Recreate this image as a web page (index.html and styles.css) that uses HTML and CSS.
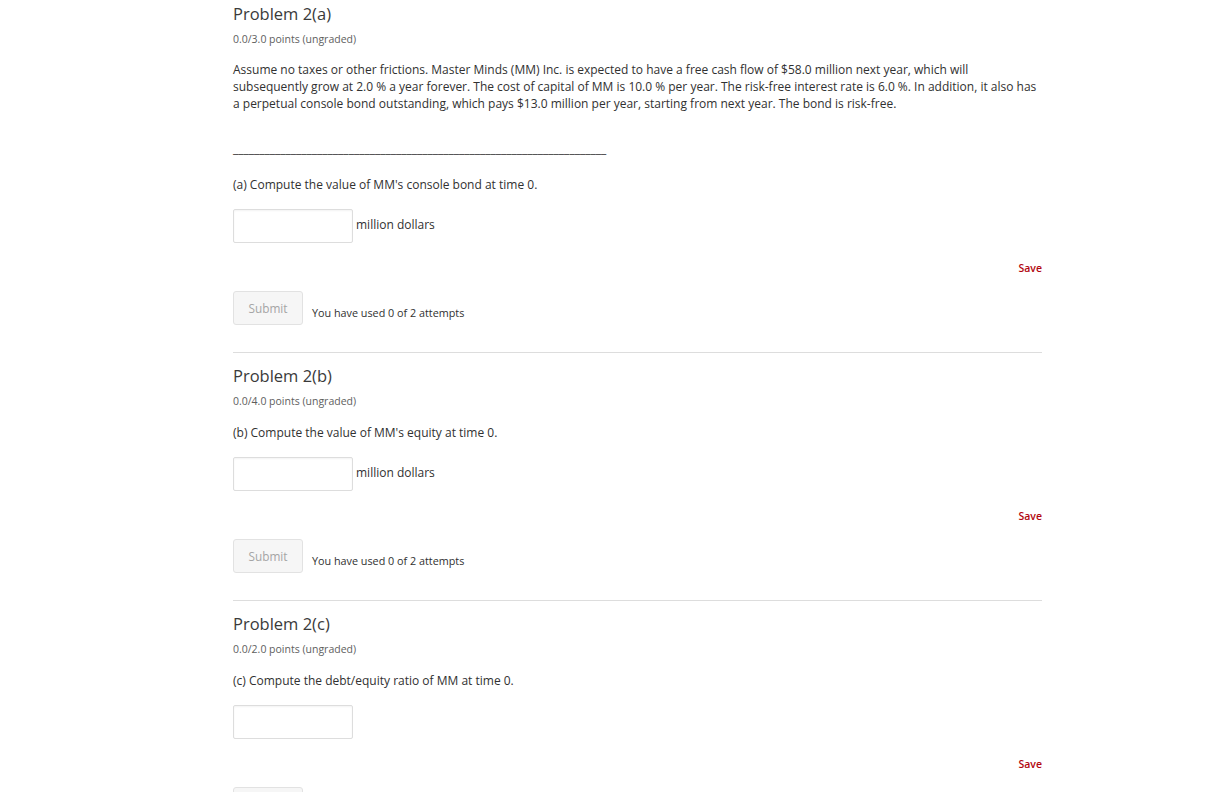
FILE: index.html
```html
<!DOCTYPE html>
<html>
<head>
<meta charset="utf-8">
<link rel="stylesheet" href="styles.css">
</head>
<body>
<div class="course">
  <section class="problem">
    <h3 class="title">Problem 2(a)</h3>
    <div class="points">0.0/3.0 points (ungraded)</div>
    <p class="text">Assume no taxes or other frictions. Master Minds (MM) Inc. is expected to have a free cash flow of $58.0 million next year, which will subsequently grow at 2.0 % a year forever. The cost of capital of MM is 10.0 % per year. The risk-free interest rate is 6.0 %. In addition, it also has a perpetual console bond outstanding, which pays $13.0 million per year, starting from next year. The bond is risk-free.</p>
    <p class="rule">_______________________________________________________________________</p>
    <p class="question first">(a) Compute the value of MM's console bond at time 0.</p>
    <div class="answer"><input class="field" type="text"><span class="unit">million dollars</span></div>
    <div class="save-row"><span class="save">Save</span></div>
    <div class="submit-row"><button class="submit">Submit</button><span class="attempts">You have used 0 of 2 attempts</span></div>
  </section>
  <section class="problem">
    <h3 class="title">Problem 2(b)</h3>
    <div class="points">0.0/4.0 points (ungraded)</div>
    <p class="question">(b) Compute the value of MM's equity at time 0.</p>
    <div class="answer"><input class="field" type="text"><span class="unit">million dollars</span></div>
    <div class="save-row"><span class="save">Save</span></div>
    <div class="submit-row"><button class="submit">Submit</button><span class="attempts">You have used 0 of 2 attempts</span></div>
  </section>
  <section class="problem">
    <h3 class="title">Problem 2(c)</h3>
    <div class="points">0.0/2.0 points (ungraded)</div>
    <p class="question">(c) Compute the debt/equity ratio of MM at time 0.</p>
    <div class="answer"><input class="field" type="text"></div>
    <div class="save-row"><span class="save">Save</span></div>
    <div class="submit-row"><button class="submit">Submit</button><span class="attempts">You have used 0 of 2 attempts</span></div>
  </section>
</div>
</body>
</html>
```
FILE: styles.css
```css
html, body {
  margin: 0;
  padding: 0;
  background: #fff;
}
body {
  font-family: "Open Sans", "Noto Sans", sans-serif;
  color: #313131;
  overflow: hidden;
  height: 792px;
}
.course {
  margin-left: 233px;
  width: 809px;
}
.problem {
  border-bottom: 1px solid #ddd;
  padding-bottom: 27px;
  margin-bottom: 9px;
}
.title {
  margin: 0;
  padding-top: 2px;
  font-size: 16.5px;
  font-weight: 400;
  line-height: 24px;
  color: #3a3a3a;
}
.points {
  margin-top: 6px;
  font-size: 10.5px;
  line-height: 14px;
  color: #5e5e5e;
}
.text {
  margin: 15px 0 0;
  font-size: 12px;
  line-height: 17px;
  color: #313131;
}
.rule {
  margin: 28px 0 0;
  font-size: 12px;
  line-height: 17px;
  color: #313131;
}
.question {
  margin: 16px 0 0;
  font-size: 12px;
  line-height: 17px;
  color: #313131;
}
.question.first {
  margin-top: 19px;
}
.answer {
  margin-top: 16px;
  display: flex;
  align-items: center;
  gap: 3px;
  height: 34px;
}
.field {
  box-sizing: border-box;
  width: 120px;
  height: 34px;
  margin: 0;
  border: 1px solid #ddd;
  border-radius: 2px;
  box-shadow: inset 0 1px 2px rgba(0,0,0,0.05);
  background: #fff;
}
.unit {
  font-size: 12px;
  color: #313131;
  margin-top: -3px;
}
.save-row {
  display: flex;
  justify-content: flex-end;
  margin-top: 18px;
  line-height: 14px;
}
.save {
  font-size: 10.5px;
  font-weight: 600;
  color: #b20610;
}
.submit-row {
  margin-top: 16px;
  display: flex;
  align-items: center;
  gap: 9px;
}
.submit {
  box-sizing: border-box;
  width: 70px;
  height: 34px;
  border: 1px solid #e2e2e2;
  border-radius: 3px;
  background: #f6f6f6;
  color: #a5a5a5;
  font-family: "Open Sans", sans-serif;
  font-size: 11.8px;
  padding: 0;
}
.attempts {
  font-size: 10.8px;
  color: #313131;
  margin-top: 9px;
}
```
